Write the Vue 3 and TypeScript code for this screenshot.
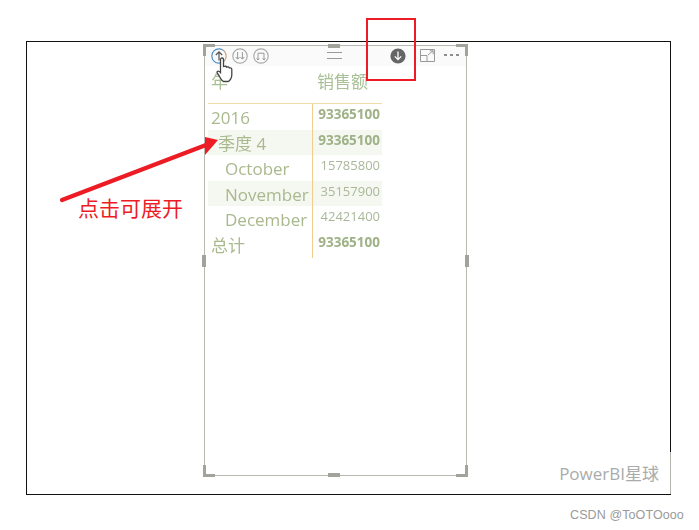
<script setup lang="ts">
interface Row {
  label: string
  value: string
  level: number
  bold: boolean
  stripe: boolean
}

const rows: Row[] = [
  { label: '2016', value: '93365100', level: 0, bold: true, stripe: false },
  { label: '季度 4', value: '93365100', level: 1, bold: true, stripe: true },
  { label: 'October', value: '15785800', level: 2, bold: false, stripe: false },
  { label: 'November', value: '35157900', level: 2, bold: false, stripe: true },
  { label: 'December', value: '42421400', level: 2, bold: false, stripe: false },
  { label: '总计', value: '93365100', level: 0, bold: true, stripe: false }
]

const indents = ['indent-0', 'indent-1', 'indent-2']
</script>

<template>
  <div class="page">
    <div class="frame">
      <span class="frame-edge"></span>
      <div class="visual">
        <span class="corner tl"></span>
        <span class="corner tr"></span>
        <span class="corner bl"></span>
        <span class="corner br"></span>
        <span class="grip top"></span>
        <span class="grip bottom"></span>
        <span class="grip left"></span>
        <span class="grip right"></span>

        <div class="toolbar">
          <div class="tool-group">
            <svg class="tool" width="18" height="18" viewBox="0 0 18 18" fill="none">
              <defs>
                <linearGradient id="ring" x1="0" y1="0" x2="1" y2="0">
                  <stop offset="0.55" stop-color="#4a90c8" />
                  <stop offset="1" stop-color="#d9a468" />
                </linearGradient>
              </defs>
              <circle cx="9" cy="9" r="7.2" stroke="url(#ring)" stroke-width="1.2" />
              <path d="M9 13.5V5M5.8 8 9 4.8 12.2 8" stroke="#555" stroke-width="1.2" />
            </svg>
            <svg class="tool" width="18" height="18" viewBox="0 0 18 18" fill="none">
              <circle cx="9" cy="9" r="7.2" stroke="#aaa" stroke-width="1.2" />
              <path d="M6.600 5v7M4.600 10l2 2.200 2-2.200M11.400 5v7M9.400 10l2 2.200 2-2.200" stroke="#999" stroke-width="1" />
            </svg>
            <svg class="tool" width="18" height="18" viewBox="0 0 18 18" fill="none">
              <circle cx="9" cy="9" r="7.2" stroke="#aaa" stroke-width="1.2" />
              <path d="M6 13V6.200h6V13M4.600 11.400 6 13l1.400-1.600M10.600 11.400 12 13l1.400-1.600" stroke="#999" stroke-width="1" />
            </svg>
          </div>
          <div class="drag-lines"></div>
          <div class="tool-right">
            <svg class="down" width="16" height="16" viewBox="0 0 16 16" fill="none">
              <circle cx="8" cy="8" r="7.6" fill="#666" />
              <path d="M8 3.600v8M4.800 8.400 8 11.600l3.200-3.200" stroke="#fff" stroke-width="1.3" />
            </svg>
            <svg class="focus" width="15" height="13" viewBox="0 0 15 13" fill="none">
              <path d="M.5 .5h14v12H.5ZM.5 6.500h6.500v6M8 6 13 1.800M9.800 1.800h3.400v3.400" stroke="#999" stroke-width="1" />
            </svg>
            <div class="dots"><i></i><i></i><i></i></div>
          </div>
        </div>

        <div class="matrix">
          <div class="matrix-head">
            <div class="head-year">年</div>
            <div class="head-sales">销售额</div>
          </div>
          <div class="matrix-body">
            <div v-for="row in rows" :key="row.label" class="row" :class="{ stripe: row.stripe }">
              <div class="label" :class="indents[row.level]">{{ row.label }}</div>
              <div class="value" :class="{ bold: row.bold }">{{ row.value }}</div>
            </div>
          </div>
        </div>
      </div>
      <div class="watermark">PowerBI星球</div>
    </div>

    <div class="red-box"></div>

    <svg class="arrow" width="699" height="530" viewBox="0 0 699 530" fill="none">
      <path d="M62 200 206 145" stroke="#ed1c24" stroke-width="4.2" stroke-linecap="round" />
      <path d="M218 140 205 137 205 155Z" fill="#ed1c24" />
    </svg>
    <div class="note">点击可展开</div>

    <svg class="hand" width="20" height="26" viewBox="0 0 20 26">
      <path d="M5.500 2.500c0-2 3-2 3 0v7l1-.2c1.500-.2 2 .2 2.300 .8 1-.6 2.200-.2 2.500 .8 1.200-.4 2.500 .3 2.500 1.600V18c0 3-2 6-3.500 6.500H8.500C6.500 24 5.500 20.500 2.500 16.500c-1.500-2 .8-3.500 3-1Z" fill="#fff" stroke="#444" stroke-width="1.300" />
    </svg>

    <div class="csdn">CSDN @ToOTOooo</div>
  </div>
</template>

<style>
html,
body {
  margin: 0;
  background: #fff;
}
</style>

<style scoped>
.page {
  position: relative;
  width: 699px;
  height: 530px;
  overflow: hidden;
  background: #fff;
  padding-top: 41px;
  box-sizing: border-box;
  font-family: "Open Sans", "Noto Sans CJK SC", sans-serif;
}

.frame {
  position: relative;
  margin-left: 26px;
  width: 645px;
  height: 454px;
  box-sizing: border-box;
  border: 1px solid #111;
  padding: 3px 0 0 177px;
}

.frame-edge {
  position: absolute;
  right: -1px;
  bottom: 0;
  width: 1px;
  height: 42px;
  background: #b5b5b0;
}

.visual {
  position: relative;
  width: 263px;
  height: 431px;
  box-sizing: border-box;
  border: 1.5px solid #b9b9b2;
}

.corner {
  position: absolute;
  width: 9px;
  height: 9px;
  border: 0 solid #a3a39b;
}
.corner.tl { left: -2px; top: -2px; border-width: 3px 0 0 3px; }
.corner.tr { right: -2px; top: -2px; border-width: 3px 3px 0 0; }
.corner.bl { left: -2px; bottom: -2px; border-width: 0 0 3px 3px; }
.corner.br { right: -2px; bottom: -2px; border-width: 0 3px 3px 0; }

.grip {
  position: absolute;
  background: #a3a39b;
}
.grip.top,
.grip.bottom {
  left: 123px;
  width: 12px;
  height: 4px;
}
.grip.top { top: -2px; }
.grip.bottom { bottom: -2px; }
.grip.left,
.grip.right {
  top: 209px;
  width: 4px;
  height: 12px;
}
.grip.left { left: -3px; }
.grip.right { right: -3px; }

.toolbar {
  display: flex;
  align-items: center;
  height: 20px;
  background: #fafafa;
  padding-left: 5px;
}

.tool-group {
  display: flex;
  gap: 3px;
  width: 117px;
}

.drag-lines {
  width: 15px;
  height: 5px;
  border-top: 1px solid #999;
  border-bottom: 1px solid #999;
  margin-top: -2px;
}

.tool-right {
  display: flex;
  align-items: center;
  margin-left: 48px;
}

.focus {
  margin-left: 14px;
  margin-top: -2px;
}

.dots {
  display: flex;
  gap: 3px;
  margin-left: 9px;
  margin-top: -2px;
}
.dots i {
  width: 3px;
  height: 2px;
  background: #8d8d8d;
}

.matrix {
  width: 174px;
  margin-left: 3px;
  filter: blur(0.35px);
}

.matrix-head {
  display: flex;
  height: 38px;
  box-sizing: border-box;
  padding: 4px 14px 0 3px;
  justify-content: space-between;
  border-bottom: 1px solid #f2dca6;
  font-size: 17px;
  line-height: 24px;
  color: #a9c097;
}

.row {
  display: flex;
  height: 25.6px;
}
.row.stripe {
  background: #f5f8f1;
}

.label {
  width: 105px;
  box-sizing: border-box;
  border-right: 1.5px solid #f0cf8c;
  padding-top: 1px;
  font-size: 17px;
  line-height: 26px;
  color: #a9b98e;
  white-space: nowrap;
}
.indent-0 { padding-left: 3px; }
.indent-1 { padding-left: 10px; }
.indent-2 { padding-left: 17px; }

.value {
  flex: 1;
  text-align: right;
  padding: 0 2px 0 0;
  font-size: 13px;
  line-height: 20px;
  color: #a9b89a;
}
.value.bold {
  font-size: 13.5px;
  font-weight: 700;
  color: #9fb186;
}

.watermark {
  position: absolute;
  right: 11px;
  bottom: 8px;
  font-size: 17px;
  line-height: 24px;
  color: #a9acaa;
}

.red-box {
  position: absolute;
  left: 366px;
  top: 18px;
  width: 50px;
  height: 63px;
  box-sizing: border-box;
  border: 2px solid #ed1c24;
}

.arrow {
  position: absolute;
  left: 0;
  top: 0;
  pointer-events: none;
}

.note {
  position: absolute;
  left: 78px;
  top: 192px;
  font-family: "Noto Sans CJK SC", sans-serif;
  font-size: 21px;
  line-height: 30px;
  color: #ed1c24;
}

.hand {
  position: absolute;
  left: 215px;
  top: 57px;
}

.csdn {
  position: absolute;
  left: 570px;
  top: 507px;
  font-family: "Liberation Sans", sans-serif;
  font-size: 12.5px;
  line-height: 16px;
  letter-spacing: 0.1px;
  color: #9a9a9a;
}
</style>
